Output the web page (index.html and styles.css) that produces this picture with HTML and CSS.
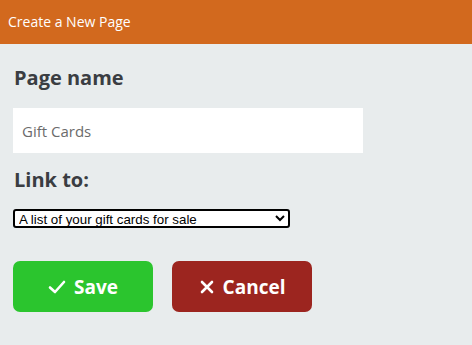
FILE: index.html
```
<!DOCTYPE html>
<html lang="en">
<head>
    <meta charset="UTF-8">
    <meta name="viewport" content="width=device-width, initial-scale=1.0">
    <title>Create a New Page</title>
    <link rel="stylesheet" href="styles.css">
</head>
<body>

<div class="header">Create a New Page</div>

<div class="form">
    <label class="label" for="pageName">Page name</label>
    <input type="text" class="text-input" id="pageName" value="Gift Cards">

    <label class="label" for="linkTo">Link to:</label>
    <select class="select" id="linkTo">
        <option>A list of your gift cards for sale</option>
    </select>

    <div class="actions">
        <button class="btn save">
            <svg width="18" height="18" viewBox="0 0 18 18"><path d="M2 9.5 L7 14 L16 4" fill="none" stroke="#fff" stroke-width="2.6" stroke-linecap="round" stroke-linejoin="round"/></svg>
            Save
        </button>
        <button class="btn cancel">
            <svg width="16" height="16" viewBox="0 0 16 16"><path d="M3 3 L13 13 M13 3 L3 13" fill="none" stroke="#fff" stroke-width="2.6" stroke-linecap="round"/></svg>
            Cancel
        </button>
    </div>
</div>

</body>
</html>
```
FILE: styles.css
```
body {
    margin: 0;
    background-color: #e8eced;
    font-family: 'Open Sans', sans-serif;
    color: #3a3d42;
}

.header {
    height: 44px;
    background-color: #d2691e;
    color: #fff;
    font-size: 14px;
    line-height: 44px;
    padding-left: 8px;
}

.form {
    display: flex;
    flex-direction: column;
    align-items: flex-start;
    padding: 20px 13px;
}

.label {
    font-size: 20px;
    font-weight: bold;
    line-height: 28px;
    margin-left: 1px;
}

.text-input {
    width: 350px;
    height: 45px;
    box-sizing: border-box;
    margin: 16px 0 13px;
    padding: 0 9px;
    border: none;
    background-color: #fff;
    font-family: 'Open Sans', sans-serif;
    font-size: 15px;
    color: #6b6b6b;
}

.select {
    width: 277px;
    height: 19px;
    margin-top: 15px;
    border: 2px solid #000;
    border-radius: 3px;
    background-color: #fff;
    font-family: 'Liberation Sans', Arial, sans-serif;
    font-size: 13.33px;
    padding: 0;
}

.actions {
    display: flex;
    gap: 19px;
    margin-top: 33px;
}

.btn {
    display: flex;
    align-items: center;
    justify-content: center;
    gap: 8px;
    width: 140px;
    height: 51px;
    border: none;
    border-radius: 7px;
    color: #fff;
    font-family: 'Open Sans', sans-serif;
    font-size: 19px;
    font-weight: bold;
    cursor: pointer;
}

.btn.save {
    background-color: #2bc52e;
}

.btn.cancel {
    background-color: #9c251f;
}
```
